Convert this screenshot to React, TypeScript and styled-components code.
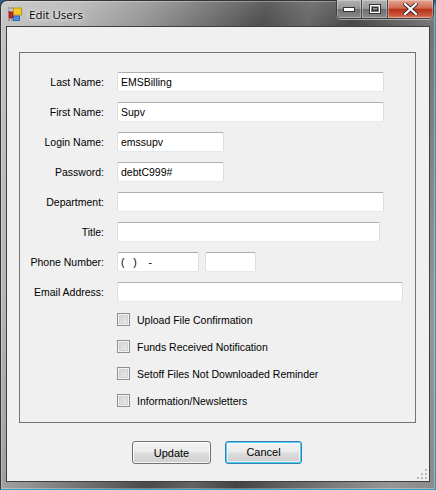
import * as React from 'react';
import styled, { createGlobalStyle, css } from 'styled-components';

const GlobalStyle = createGlobalStyle`
  html, body {
    margin: 0;
    padding: 0;
    background: #2b5d8a;
    overflow: hidden;
  }
  * {
    box-sizing: border-box;
  }
`;

const Window = styled.div`
  width: 436px;
  height: 490px;
  display: flex;
  flex-direction: column;
  padding: 0 5px 7px;
  border: 1px solid #343434;
  border-bottom-color: #2fa6c8;
  border-right-color: #3b8fae;
  border-radius: 7px 7px 0 0;
  background:
    linear-gradient(180deg, rgba(255, 255, 255, 0.12) 0%, rgba(255, 255, 255, 0) 30px),
    linear-gradient(
      104deg,
      #c4c4c4 0%,
      #b5b5b5 14%,
      #959595 26%,
      #6d6d6d 38%,
      #4a4a4a 48%,
      #636363 56%,
      #434343 64%,
      #5e5e5e 72%,
      #7d7d7d 82%,
      #969696 92%,
      #8a8a8a 100%
    );
  box-shadow: inset 0 0 0 1px rgba(255, 255, 255, 0.3);
  font-family: 'Liberation Sans', Arial, sans-serif;
`;

const TitleBar = styled.div`
  height: 25px;
  display: flex;
  align-items: flex-start;
`;

const AppIcon = styled.svg`
  margin: 6px 0 0 2px;
  flex: none;
`;

const Title = styled.div`
  margin: 6px 0 0 6px;
  font-family: 'Open Sans', 'Liberation Sans', sans-serif;
  font-size: 11.5px;
  line-height: 15px;
  color: #000;
  text-shadow: 0 0 6px rgba(255, 255, 255, 0.9), 0 0 3px rgba(255, 255, 255, 0.9);
`;

const Captions = styled.div`
  margin: -1px -4px 0 auto;
  display: flex;
  height: 19px;
  border: 1px solid #3e3e3e;
  border-top: none;
  border-radius: 0 0 5px 5px;
  overflow: hidden;
  box-shadow: 0 1px 0 rgba(255, 255, 255, 0.45);
`;

const CaptionButton = styled.div<{ $w: number; $close?: boolean }>`
  width: ${p => p.$w}px;
  display: flex;
  align-items: center;
  justify-content: center;
  border-right: 1px solid #4a4a4a;
  box-shadow: inset 0 0 0 1px rgba(255, 255, 255, 0.3);
  background: linear-gradient(180deg, #b3b3b3 0%, #969696 48%, #6f6f6f 52%, #8a8a8a 100%);
  ${p =>
    p.$close &&
    css`
      border-right: none;
      background: linear-gradient(180deg, #e3a493 0%, #d26a51 45%, #b6321b 52%, #c9553b 85%, #dc8a6c 100%);
    `}
`;

const Client = styled.div`
  flex: 1;
  position: relative;
  display: flex;
  flex-direction: column;
  background: #f0f0f0;
  border: 1px solid #3f3f3f;
  padding: 25px 13px 0 12px;
`;

const Group = styled.div`
  border: 1px solid #747474;
  height: 371px;
  padding: 19px 0 0;
`;

const Form = styled.div`
  display: grid;
  grid-template-columns: 84px auto;
  column-gap: 13px;
  row-gap: 10px;
  justify-items: start;
`;

const Label = styled.label`
  justify-self: end;
  align-self: center;
  font-size: 10.5px;
  color: #000;
  white-space: nowrap;
`;

const Field = styled.div<{ $w: number }>`
  width: ${p => p.$w}px;
  height: 20px;
  background: #fff;
  border: 1px solid #dbdfe6;
  border-top-color: #abadb3;
  border-bottom-color: #e3e9ef;
  border-radius: 2px;
  padding: 2px 0 0 3px;
  font-size: 10.5px;
  line-height: 14px;
  color: #000;
  white-space: pre;
`;

const FieldPair = styled.div`
  display: flex;
  gap: 6px;
`;

const Checks = styled.div`
  margin: 11px 0 0 97px;
  display: flex;
  flex-direction: column;
  gap: 14px;
`;

const CheckRow = styled.div`
  display: flex;
  align-items: center;
  gap: 7px;
  height: 13px;
  font-size: 10.5px;
  color: #000;
`;

const Box = styled.span`
  width: 13px;
  height: 13px;
  flex: none;
  border: 1px solid #8f8f8f;
  background: #f4f4f4;
  box-shadow: inset 0 0 0 1px #f4f4f4, inset 0 0 0 2px #d2d2d2;
  background-image: linear-gradient(135deg, #cfcfcf 0%, #eeeeee 100%);
  background-clip: content-box;
  padding: 2px;
`;

const Buttons = styled.div`
  display: flex;
  justify-content: center;
  gap: 14px;
  margin-top: 18px;
  padding-right: 1px;
`;

const Button = styled.div<{ $w: number; $default?: boolean }>`
  width: ${p => p.$w}px;
  height: 23px;
  display: flex;
  align-items: center;
  justify-content: center;
  font-size: 11px;
  color: #000;
  border: 1px solid #707070;
  border-radius: 3px;
  background: linear-gradient(180deg, #f2f2f2 0%, #ebebeb 48%, #dddddd 52%, #cfcfcf 100%);
  box-shadow: inset 0 0 0 1px rgba(255, 255, 255, 0.8);
  ${p =>
    p.$default &&
    css`
      border-color: #3c7fb1;
      box-shadow: inset 0 0 0 1px #48d1fa, inset 0 0 0 2px rgba(255, 255, 255, 0.6);
      padding-bottom: 2px;
    `}
`;

const Grip = styled.svg`
  position: absolute;
  right: 1px;
  bottom: 1px;
`;

const fields: { label: string; value: string; w: number }[] = [
  { label: 'Last Name:', value: 'EMSBilling', w: 267 },
  { label: 'First Name:', value: 'Supv', w: 267 },
  { label: 'Login Name:', value: 'emssupv', w: 107 },
  { label: 'Password:', value: 'debtC999#', w: 107 },
  { label: 'Department:', value: '', w: 267 },
  { label: 'Title:', value: '', w: 263 },
];

const options = [
  'Upload File Confirmation',
  'Funds Received Notification',
  'Setoff Files Not Downloaded Reminder',
  'Information/Newsletters',
];

function App() {
  return (
    <>
      <GlobalStyle />
      <Window>
        <TitleBar>
          <AppIcon width="15" height="15" viewBox="0 0 15 15">
            <g fill="#9a9a9a">
              <rect x="0" y="0" width="2" height="2" />
              <rect x="3" y="0" width="2" height="2" />
              <rect x="0" y="3" width="2" height="2" />
              <rect x="0" y="12" width="2" height="2" />
              <rect x="3" y="12" width="2" height="2" />
            </g>
            <rect x="1" y="5" width="4" height="6" fill="#d42020" stroke="#7a1010" strokeWidth="0.8" />
            <rect x="5.5" y="1" width="8" height="7" fill="#f7c82a" stroke="#b68a10" strokeWidth="0.8" />
            <rect x="5.5" y="9" width="6" height="4.5" fill="#4a8ee6" stroke="#2a5aa6" strokeWidth="0.8" />
          </AppIcon>
          <Title>Edit Users</Title>
          <Captions>
            <CaptionButton $w={25}>
              <svg width="12" height="5" viewBox="0 0 12 5">
                <rect x="0.5" y="0.5" width="11" height="4" fill="#fff" stroke="#333" />
              </svg>
            </CaptionButton>
            <CaptionButton $w={26}>
              <svg width="12" height="10" viewBox="0 0 12 10">
                <rect x="0.5" y="0.5" width="11" height="9" fill="none" stroke="#333" />
                <rect x="1.5" y="1.5" width="9" height="7" fill="none" stroke="#fff" />
                <rect x="3.5" y="3.5" width="5" height="3" fill="none" stroke="#333" />
              </svg>
            </CaptionButton>
            <CaptionButton $w={45} $close>
              <svg width="15" height="12" viewBox="0 0 15 12">
                <path d="M2 1 L13 11 M13 1 L2 11" stroke="#3a2a2a" strokeWidth="4" strokeLinecap="square" />
                <path d="M2 1 L13 11 M13 1 L2 11" stroke="#fff" strokeWidth="2.2" strokeLinecap="square" />
              </svg>
            </CaptionButton>
          </Captions>
        </TitleBar>
        <Client>
          <Group>
            <Form>
              {fields.map(f => (
                <React.Fragment key={f.label}>
                  <Label>{f.label}</Label>
                  <Field $w={f.w}>{f.value}</Field>
                </React.Fragment>
              ))}
              <Label>Phone Number:</Label>
              <FieldPair>
                <Field $w={82}>{'(   )    -'}</Field>
                <Field $w={51} />
              </FieldPair>
              <Label>Email Address:</Label>
              <Field $w={286} />
            </Form>
            <Checks>
              {options.map(o => (
                <CheckRow key={o}>
                  <Box />
                  {o}
                </CheckRow>
              ))}
            </Checks>
          </Group>
          <Buttons>
            <Button $w={79}>Update</Button>
            <Button $w={77} $default>
              Cancel
            </Button>
          </Buttons>
          <Grip width="12" height="12" viewBox="0 0 12 12">
            <g fill="#b8b8b8">
              <rect x="9" y="1" width="2" height="2" />
              <rect x="5" y="5" width="2" height="2" />
              <rect x="9" y="5" width="2" height="2" />
              <rect x="1" y="9" width="2" height="2" />
              <rect x="5" y="9" width="2" height="2" />
              <rect x="9" y="9" width="2" height="2" />
            </g>
          </Grip>
        </Client>
      </Window>
    </>
  );
}

export default App;
